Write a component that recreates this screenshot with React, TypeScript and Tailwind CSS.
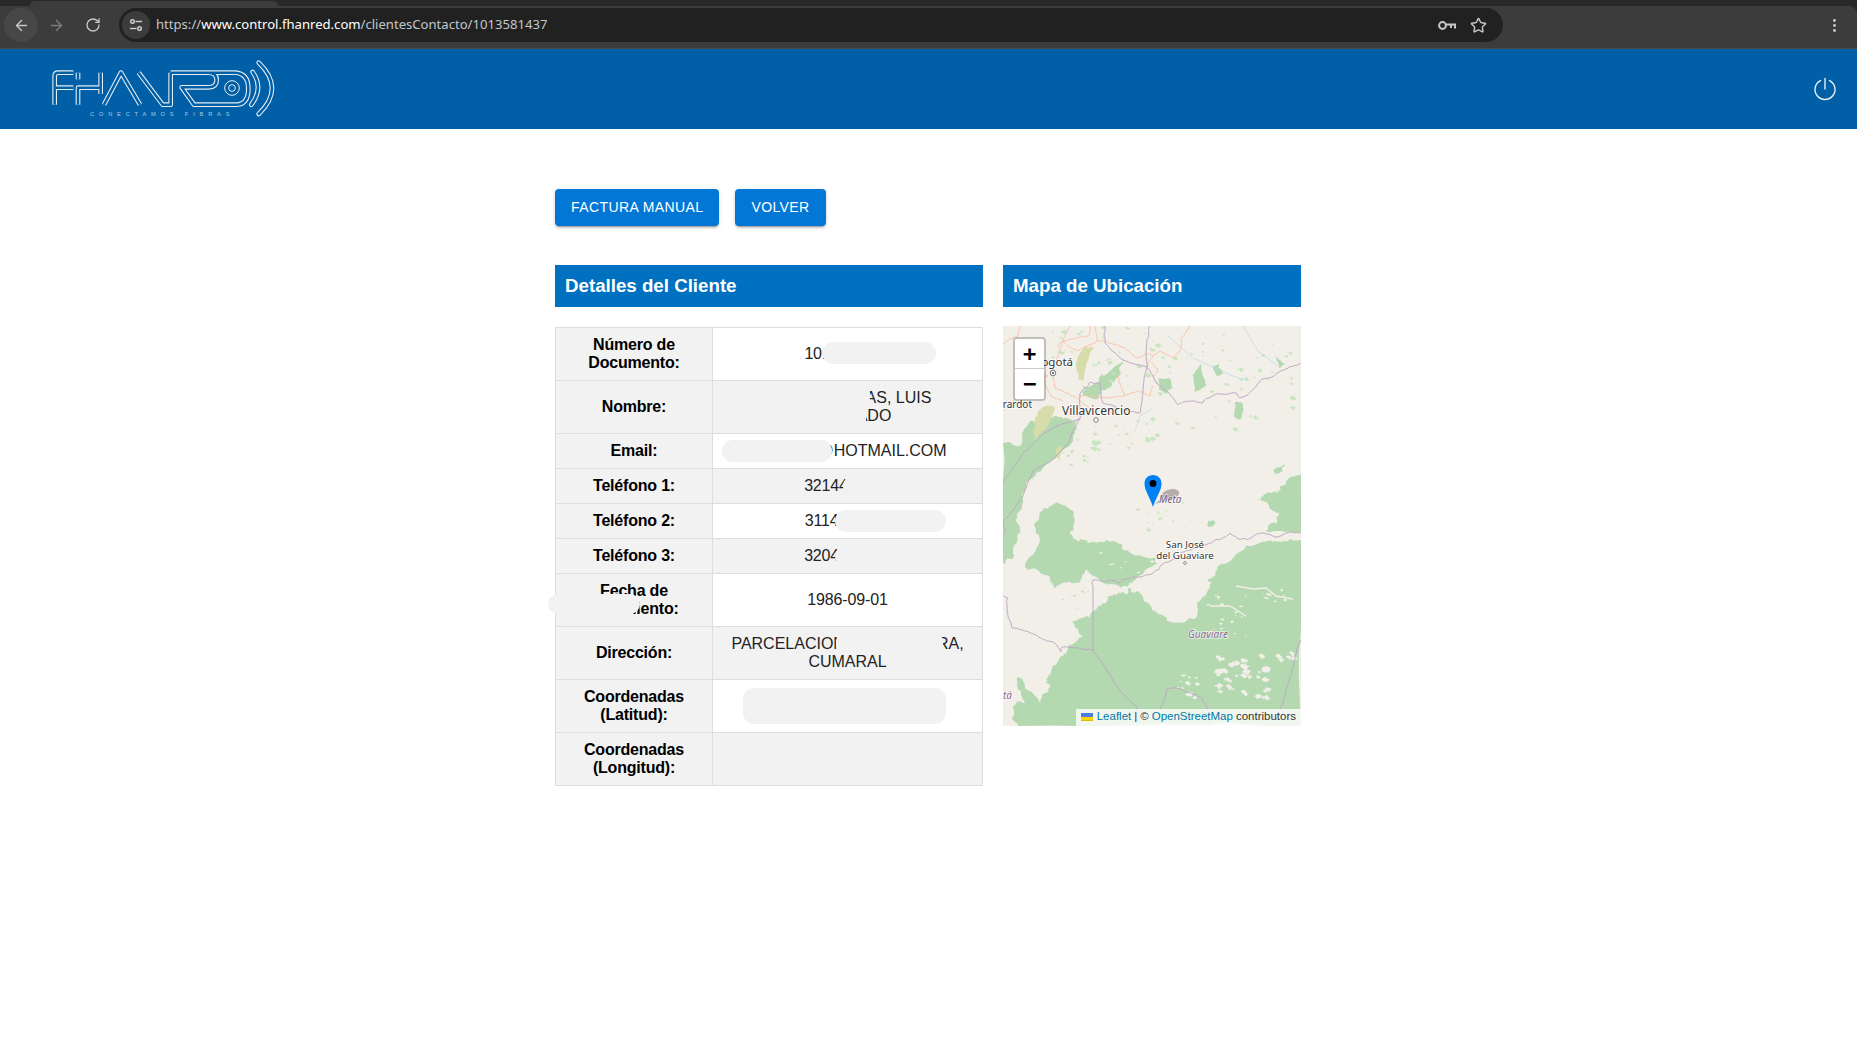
import { ArrowLeft, ArrowRight, RotateCw, Star, EllipsisVertical } from "lucide-react";

const FOREST = "#b4d9b0";
const PALE = "#c9e5bf";
const LAND = "#f2efe9";
const BORDER = "#bda9c4";
const ROAD = "#f9bfa6";

// small seeded generator, the map has to come out the same on every load
function makeRandom(seed: number) {
  let s = seed;
  return () => {
    s = (s * 16807) % 2147483647;
    return s / 2147483647;
  };
}

// breaks polygon edges up so they look like traced land cover
function rough(points: string, amp: number, seed: number, closed = true) {
  const rnd = makeRandom(seed);
  let pts = points.split(" ").map((p) => p.split(",").map(Number));
  let a = amp;
  for (let level = 0; level < 3; level++) {
    const next: number[][] = [];
    pts.forEach((p, i) => {
      next.push(p);
      if (!closed && i === pts.length - 1) return;
      const q = pts[(i + 1) % pts.length];
      next.push([(p[0] + q[0]) / 2 + (rnd() - 0.5) * a, (p[1] + q[1]) / 2 + (rnd() - 0.5) * a]);
    });
    pts = next;
    a *= 0.65;
  }
  return pts.map((p) => `${p[0].toFixed(1)},${p[1].toFixed(1)}`).join(" ");
}

function blobs(count: number, x: number, y: number, w: number, h: number, size: number, seed: number) {
  const rnd = makeRandom(seed);
  const out: string[] = [];
  for (let i = 0; i < count; i++) {
    const cx = x + rnd() * w;
    const cy = y + rnd() * h;
    const r = size * (0.4 + rnd());
    out.push(rough(`${cx - r},${cy} ${cx},${cy - r * 0.7} ${cx + r},${cy} ${cx},${cy + r * 0.7}`, r * 0.7, 1000 + i + seed));
  }
  return out;
}

const forests = [
  "0,117 17,120 27,95 45,93 67,93 75,92 72,107 55,130 33,147 23,157 15,187 17,200 15,213 10,233 0,240",
  "40,184 54,176 69,184 67,207 74,214 84,216 104,214 120,224 150,232 155,237 130,257 114,259 92,250 84,244 77,256 52,262 37,247 22,241 34,221 32,201",
  "298,214 270,216 244,219 214,241 204,254 205,264 194,277 195,289 174,297 160,289 137,267 127,262 114,269 100,277 87,292 69,296 79,311 65,321 57,331 45,351 47,361 37,377 15,351 22,377 10,381 15,400 298,400",
  "298,157 283,157 276,165 262,168 254,174 274,187 274,197 262,205 298,206",
  "80,60 93,57 100,50 120,35 118,47 103,63 95,73 80,70",
  "0,164 7,190 0,200",
].map((p, i) => rough(p, 7, 77 + i * 13));

const yellows = [
  "32,93 43,80 52,82 42,104 32,116",
  "73,40 83,20 91,22 80,55 75,50",
  "52,128 58,118 56,135",
].map((p, i) => rough(p, 4, 31 + i));

const holes = [
  ...blobs(34, 215, 330, 50, 42, 3.6, 11),
  ...blobs(12, 175, 348, 20, 24, 2.8, 12),
  ...blobs(8, 276, 322, 16, 12, 2.6, 13),
  ...blobs(18, 205, 262, 90, 20, 1.6, 14),
  ...blobs(14, 190, 285, 60, 25, 1.4, 15),
  ...blobs(10, 90, 225, 60, 25, 1.4, 16),
];

const patches = [
  ...blobs(28, 150, 40, 140, 70, 2.4, 21),
  ...blobs(22, 90, 95, 60, 30, 2.4, 22),
  ...blobs(20, 100, 0, 90, 60, 2.6, 23),
  ...blobs(14, 50, 0, 60, 40, 2.4, 24),
  ...blobs(12, 135, 175, 60, 30, 1.6, 25),
  ...blobs(12, 200, 5, 90, 30, 1.6, 26),
  ...blobs(10, 60, 260, 30, 25, 1.4, 27),
  ...blobs(12, 60, 100, 30, 40, 2, 28),
];

const solidPatches = [
  "156,52 166,52 170,62 164,68 156,62",
  "190,50 198,38 203,60 192,66",
  "210,40 216,38 220,48 214,50",
  "232,76 240,78 237,94 231,90",
  "272,30 282,38 276,42",
  "283,158 290,150 298,148 298,158",
  "270,145 282,138 280,146 272,148",
  "205,195 212,195 210,200 204,200",
].map((p, i) => rough(p, 3, 51 + i));

const borders = [
  "144,14 144,41 150,50 155,58 167,68 175,79 182,76 188,75 200,77 205,72 217,68 233,67 237,72 243,70 257,55 267,52 283,43 298,37",
  "144,41 140,65 137,87 120,84 100,77 97,57 87,56 77,67 77,93 53,100 38,110 20,127 0,157",
  "102,0 102,17 120,34 144,41",
  "77,93 65,118 48,135 30,145 20,170 0,195",
  "147,0 146,8 144,14",
  "90,262 90,254 100,256 107,254 116,257 127,252 140,250 150,247 160,238 169,234 180,226 192,222 207,217 218,213 227,207 235,213 244,214 252,209 260,207 272,211 284,207 298,207",
  "90,324 60,321 58,326 50,316 40,313 27,307 9,302 4,281 4,271 0,270",
  "90,324 100,338 110,354 120,368 134,381 134,400",
  "150,395 160,377 164,364 172,362 180,364 190,368 200,374 204,384 208,400",
  "270,400 280,377 287,351 292,330 298,314",
  "0,195 3,205 0,210",
].map((p, i) => rough(p, 2, 301 + i * 7, false));

const roads = [
  "150,30 157,25 170,32 178,23 178,13 187,0",
  "144,41 150,30 142,28 135,32 122,22 110,18 102,15",
  "55,22 60,15 85,10 87,0",
  "50,45 55,30 60,15 67,0",
  "50,45 52,62 70,70 90,85",
  "75,70 103,72 120,70 135,65 147,70 150,60",
  "0,85 15,70 35,55 45,50",
  "102,15 95,15 92,0",
  "0,18 15,10 18,0",
  "45,50 30,40 25,30",
  "155,58 150,50 155,43 148,36",
  "60,15 75,25 95,15",
  "40,50 48,70 60,75",
  "115,50 122,70",
].map((p, i) => rough(p, 2, 401 + i * 5, false));

function TileMap() {
  return (
    <svg viewBox="0 0 298 400" className="block h-full w-full" style={{ fontFamily: '"Noto Sans", sans-serif' }}>
      <rect width="298" height="400" fill={LAND} />
      {forests.map((p, i) => (
        <polygon key={i} points={p} fill={FOREST} />
      ))}
      {yellows.map((p, i) => (
        <polygon key={i} points={p} fill="#d6dcaa" />
      ))}
      {holes.map((p, i) => (
        <polygon key={i} points={p} fill={LAND} />
      ))}
      {patches.map((p, i) => (
        <polygon key={i} points={p} fill={PALE} />
      ))}
      {solidPatches.map((p, i) => (
        <polygon key={i} points={p} fill={FOREST} />
      ))}
      <g fill="none" stroke={LAND} strokeWidth="1.4">
        <polyline points="233,260 250,263 263,262 273,270 290,273" />
        <polyline points="207,280 227,280 243,290" />
        <polyline points="130,257 150,247 170,238" strokeWidth="3" />
        <polyline points="205,218 230,212 260,212 298,210" strokeWidth="3" />
      </g>
      <g fill="none" stroke="#b9dbe6" strokeWidth="0.7">
        <polyline points="150,82 137,90 132,105" />
        <polyline points="165,10 190,32 230,50 245,55" />
        <polyline points="240,0 255,25 275,40" />
      </g>
      <g fill="none" stroke={ROAD} strokeWidth="0.9">
        {roads.map((p, i) => (
          <polyline key={i} points={p} />
        ))}
      </g>
      <g fill="none" stroke={BORDER} strokeWidth="1">
        {borders.map((p, i) => (
          <polyline key={i} points={p} />
        ))}
        <polyline points="90,324 90,262" />
      </g>

      <g fontSize="12" fill="#333" stroke="#fff" strokeWidth="2" paintOrder="stroke" strokeOpacity="0.8">
        <text x="70" y="40" textAnchor="end" fontSize="11.5">Bogotá</text>
        <text x="59" y="89">Villavicencio</text>
        <text x="29" y="82" textAnchor="end" fontSize="10">Girardot</text>
        <text x="182" y="222" textAnchor="middle" fontSize="9.8">San José</text>
        <text x="182" y="233" textAnchor="middle" fontSize="9.8">del Guaviare</text>
      </g>
      <g fontSize="10" fontStyle="italic" fill="#8a6a8f" stroke="#fff" strokeWidth="1.6" paintOrder="stroke" strokeOpacity="0.7">
        <text x="185" y="312">Guaviare</text>
        <text x="9" y="373" textAnchor="end">Caquetá</text>
      </g>

      <circle cx="50" cy="47" r="2.8" fill="#fff" stroke="#555" strokeWidth="0.8" />
      <circle cx="50" cy="47" r="1.1" fill="#555" />
      <circle cx="93" cy="94" r="2.3" fill="#fff" stroke="#666" strokeWidth="0.8" />
      <circle cx="182" cy="237" r="1.4" fill="#fff" stroke="#666" strokeWidth="0.7" />

      <ellipse cx="167" cy="169" rx="9.5" ry="5.5" fill="#b3aea7" transform="rotate(-18 167 169)" />
      <path d="M152 178 L160 171 L166 174 Z" fill="#b3aea7" />
      <text x="156" y="177" fontSize="10" fontStyle="italic" fill="#7b5a80" stroke="#fff" strokeWidth="1.4" paintOrder="stroke" strokeOpacity="0.7">
        Meta
      </text>

      <path d="M150 181 C147 171 141.5 165 141.5 157.5 C141.5 152.5 145.3 149 150 149 C154.7 149 158.5 152.5 158.5 157.5 C158.5 165 153 171 150 181 Z" fill="#0480f6" />
      <circle cx="150" cy="157.5" r="3.4" fill="#000" />
    </svg>
  );
}

function Logo() {
  const skeleton = (
    <>
      <path d="M44 152 V66 Q44 56 54 56 H100 M44 101 H100" />
      <path d="M114 56 V76 M114 152 V101 H182 V56 M182 101 V120" />
      <path d="M192 152 L243 56 L300 152" />
      <path d="M296 56 L368 152 H392 V56" />
      <path d="M392 56 H505 Q530 56 530 78 Q530 100 505 100 H425 L462 152 H590 Q625 150 625 104 Q625 58 585 56 H505" />
    </>
  );
  const arcs = (
    <>
      <path d="M638 54 Q672 102 634 152" strokeLinecap="round" />
      <path d="M656 26 Q736 102 656 180" strokeLinecap="round" />
    </>
  );
  return (
    <svg viewBox="0 0 750 210" className="h-[70px] w-[250px]">
      <g fill="none" strokeLinejoin="round" stroke="#e6eef5" strokeWidth="14">
        {skeleton}
        {arcs}
      </g>
      <g fill="none" strokeLinejoin="round" stroke="#005fa6" strokeWidth="7.5">
        {skeleton}
        {arcs}
      </g>
      <g fill="none" stroke="#e6eef5" strokeWidth="3">
        <circle cx="576" cy="102" r="10" />
        <circle cx="576" cy="102" r="22" />
      </g>
      <text x="150" y="187" fontSize="17" letterSpacing="14.5" fill="#a9cbe3" fontFamily='"Liberation Sans", sans-serif'>
        CONECTAMOS FIBRAS
      </text>
    </svg>
  );
}

function BrowserBar() {
  return (
    <div className="bg-[#282828]">
      <div className="relative h-[6px]">
        <div className="absolute left-[30px] top-[1px] h-[5px] w-[248px] rounded-t-[6px] bg-[#3c3c3c]" />
      </div>
      <div className="flex h-[43px] items-center rounded-tr-[8px] border-b border-[#4a4a4a] bg-[#3c3c3c] pb-[4px]">
        <div className="ml-[4px] flex h-[34px] w-[34px] items-center justify-center rounded-full bg-[#474747]">
          <ArrowLeft size={17} strokeWidth={2} className="text-[#c7c7c7]" />
        </div>
        <ArrowRight size={17} strokeWidth={2} className="ml-[10px] text-[#7b7b7b]" />
        <RotateCw size={16} strokeWidth={2} className="ml-[20px] text-[#c7c7c7]" />
        <div className="ml-[18px] flex h-[34px] w-[1384px] items-center rounded-full bg-[#212121] pr-[16px]">
          <div className="ml-[3px] flex h-[28px] w-[28px] items-center justify-center rounded-full bg-[#3c3c3c]">
            <svg width="14" height="14" viewBox="0 0 14 14" fill="none" stroke="#d0d0d0" strokeWidth="1.4">
              <circle cx="3.5" cy="3.5" r="1.8" />
              <path d="M6.5 3.5 H13" />
              <circle cx="10.5" cy="10.5" r="1.8" />
              <path d="M1 10.5 H7.5" />
            </svg>
          </div>
          <div className="ml-[6px] text-[13.1px] text-[#c2c7cc] [font-family:'Noto_Sans',sans-serif]">
            https://<span className="text-white">www.control.fhanred.com</span>/clientesContacto/1013581437
          </div>
          <div className="ml-auto flex items-center gap-[14px]">
            <svg width="18" height="11" viewBox="0 0 18 11" fill="none" stroke="#c7c7c7" strokeWidth="2">
              <circle cx="4.5" cy="5.5" r="3.4" />
              <path d="M8 4.5 H17 V8.5 M13 4.5 V8" />
            </svg>
            <Star size={17} strokeWidth={2} className="text-[#c7c7c7]" />
          </div>
        </div>
        <EllipsisVertical size={17} strokeWidth={2.2} className="ml-[323px] text-[#c7c7c7]" />
      </div>
    </div>
  );
}

function Mask({ className }: { className: string }) {
  return <div className={`absolute bg-[#f2f2f2] ${className}`} />;
}

function Label({ children }: { children: React.ReactNode }) {
  return <td className="w-[157px] border border-[#ddd] bg-[#f2f2f2] p-2 text-center font-bold tracking-[-0.2px] text-black">{children}</td>;
}

function Value({ gray, children }: { gray?: boolean; children?: React.ReactNode }) {
  return <td className={`border border-[#ddd] p-2 text-center ${gray ? "bg-[#f2f2f2]" : "bg-white"}`}>{children}</td>;
}

function Gap({ className }: { className: string }) {
  return <span className={`inline-block ${className}`} />;
}

function ClientTable() {
  return (
    <div className="relative">
      <table className="w-[428px] table-fixed border-collapse text-[16px] leading-[18px] text-[#222]">
        <tbody>
          <tr>
            <Label>Número de Documento:</Label>
            <Value><span className="tracking-[-0.15px]">101</span><Gap className="w-[60px]" /></Value>
          </tr>
          <tr>
            <Label>Nombre:</Label>
            <Value gray>
              <Gap className="w-[102px]" />AS, LUIS
              <br />
              <Gap className="w-[53px]" />ADO
            </Value>
          </tr>
          <tr>
            <Label>Email:</Label>
            <Value><Gap className="w-[69px]" />@HOTMAIL.COM</Value>
          </tr>
          <tr>
            <Label>Teléfono 1:</Label>
            <Value gray><span className="tracking-[-0.15px]">32144</span><Gap className="w-[43px]" /></Value>
          </tr>
          <tr>
            <Label>Teléfono 2:</Label>
            <Value><span className="tracking-[-0.15px]">31144</span><Gap className="w-[43px]" /></Value>
          </tr>
          <tr>
            <Label>Teléfono 3:</Label>
            <Value gray><span className="tracking-[-0.15px]">32044</span><Gap className="w-[43px]" /></Value>
          </tr>
          <tr>
            <Label>Fecha de Nacimiento:</Label>
            <Value><span className="tracking-[-0.15px]">1986-09-01</span></Value>
          </tr>
          <tr>
            <Label>Dirección:</Label>
            <Value gray>
              PARCELACION<Gap className="w-[92px]" />RA,
              <br />
              CUMARAL
            </Value>
          </tr>
          <tr>
            <Label>Coordenadas (Latitud):</Label>
            <Value>&nbsp;</Value>
          </tr>
          <tr>
            <Label>Coordenadas (Longitud):</Label>
            <Value gray>&nbsp;</Value>
          </tr>
        </tbody>
      </table>
      <Mask className="left-[267px] top-[15px] h-[22px] w-[114px] rounded-[11px]" />
      <Mask className="left-[167px] top-[113px] h-[22px] w-[110px] rounded-[11px]" />
      <Mask className="left-[280px] top-[183px] h-[22px] w-[111px] rounded-[11px]" />
      <Mask className="left-[288px] top-[148px] h-[22px] w-[60px] rounded-[11px]" />
      <Mask className="left-[280px] top-[218px] h-[22px] w-[60px] rounded-[11px]" />
      <Mask className="left-[180px] top-[58px] h-[19px] w-[135px]" />
      <Mask className="left-[180px] top-[77px] h-[24px] w-[131px]" />
      <Mask className="left-[-7px] top-[267px] h-[20px] w-[92px] rounded-[10px]" />
      <Mask className="left-[281px] top-[304px] h-[24px] w-[107px] rounded-[11px]" />
      <Mask className="left-[188px] top-[361px] h-[36px] w-[203px] rounded-[11px]" />
    </div>
  );
}

export default function App() {
  return (
    <div className="min-h-[1042px] w-full overflow-hidden bg-white [font-family:'Liberation_Sans',Arial,sans-serif]">
      <BrowserBar />
      <header className="flex h-[80px] items-center justify-between bg-[#005fa6] pl-[40px] pr-[20px]">
        <Logo />
        <svg width="24" height="24" viewBox="0 0 24 24" fill="none" stroke="#e8f0f6" strokeWidth="1.4" strokeLinecap="round">
          <path d="M12 1.5 V12" />
          <path d="M7.5 3.6 A10 10 0 1 0 16.5 3.6" />
        </svg>
      </header>

      <main className="ml-[555px] w-[746px] pt-[60px]">
        <div className="flex gap-[16px]">
          <button className="h-[37px] rounded-[4px] bg-[#0277d6] px-[16px] text-[14px] uppercase tracking-[0.4px] text-white shadow-[0_3px_1px_-2px_rgba(0,0,0,0.2),0_2px_2px_0_rgba(0,0,0,0.14),0_1px_5px_0_rgba(0,0,0,0.12)]">
            Factura Manual
          </button>
          <button className="h-[37px] rounded-[4px] bg-[#0277d6] px-[16px] text-[14px] uppercase tracking-[0.4px] text-white shadow-[0_3px_1px_-2px_rgba(0,0,0,0.2),0_2px_2px_0_rgba(0,0,0,0.14),0_1px_5px_0_rgba(0,0,0,0.12)]">
            Volver
          </button>
        </div>

        <div className="mt-[39px] flex gap-[20px]">
          <section className="w-[428px]">
            <h2 className="mb-[20px] flex h-[42px] items-center bg-[#0071c1] pl-[10px] text-[18.72px] font-bold text-white">
              Detalles del Cliente
            </h2>
            <ClientTable />
          </section>
          <section className="w-[298px]">
            <h2 className="mb-[19px] flex h-[42px] items-center bg-[#0071c1] pl-[10px] text-[18.72px] font-bold text-white">
              Mapa de Ubicación
            </h2>
            <div className="relative h-[400px] w-[298px] overflow-hidden">
              <TileMap />
              <div className="absolute left-[10px] top-[11px] w-[33px] rounded-[4px] border-2 border-[rgba(0,0,0,0.2)] bg-clip-padding">
                <div className="flex h-[30px] items-center justify-center rounded-t-[2px] border-b border-[#ccc] bg-white text-[22px] font-bold leading-none text-black [font-family:'DejaVu_Sans_Mono',monospace]">
                  +
                </div>
                <div className="flex h-[30px] items-center justify-center rounded-b-[2px] bg-white text-[22px] font-bold leading-none text-black [font-family:'DejaVu_Sans_Mono',monospace]">
                  −
                </div>
              </div>
              <div className="absolute bottom-0 right-0 flex h-[17px] items-center bg-white/80 px-[5px] pb-[1px] text-[11.5px] text-[#333]">
                <svg width="12" height="8" viewBox="0 0 12 8" className="mr-[4px]">
                  <path fill="#4C7BE1" d="M0 0h12v4H0z" />
                  <path fill="#FFD500" d="M0 4h12v3H0z" />
                  <path fill="#E0BC00" d="M0 7h12v1H0z" />
                </svg>
                <span className="text-[#0078a8]">Leaflet</span>
                <span className="mx-[3px]">|</span>© <span className="ml-[3px] text-[#0078a8]">OpenStreetMap</span>
                <span className="ml-[3px]">contributors</span>
              </div>
            </div>
          </section>
        </div>
      </main>
    </div>
  );
}
